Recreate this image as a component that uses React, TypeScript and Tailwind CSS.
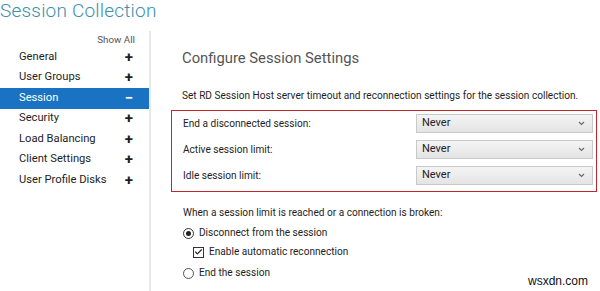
import { Check } from 'lucide-react';

const navItems = [
    { label: 'General', open: false },
    { label: 'User Groups', open: false },
    { label: 'Session', open: true },
    { label: 'Security', open: false },
    { label: 'Load Balancing', open: false },
    { label: 'Client Settings', open: false },
    { label: 'User Profile Disks', open: false },
];

const limits = [
    'End a disconnected session:',
    'Active session limit:',
    'Idle session limit:',
];

const Chevron = () => (
    <svg width="7" height="5" viewBox="0 0 7 5" className="text-[#6b6b6b]">
        <path d="M1 1 L3.5 3.5 L6 1" fill="none" stroke="currentColor" strokeWidth="1.2" />
    </svg>
);

const Select = () => (
    <div className="w-[177px] h-[19px] flex items-center justify-between pl-[5px] pr-[7px] border border-[#c9c9c9] bg-gradient-to-b from-[#f4f4f4] to-[#e4e4e4] text-[11px] text-[#222]">
        <span>Never</span>
        <Chevron />
    </div>
);

const App = () => {
    return (
        <div className="w-[600px] h-[291px] overflow-hidden bg-white relative font-['Roboto',sans-serif] text-[#1e1e1e]">
            <h1 className="mt-[1px] text-[19px] leading-[20px] font-light text-[#3b8fab] tracking-[0.2px]">
                Session Collection
            </h1>

            <div className="flex mt-[10px]">
                {/* left nav */}
                <div className="w-[151px] shrink-0 h-[260px] border-r-[2px] border-[#e8e8e8] pt-[1px]">
                    <div className="text-right pr-[14px] text-[9.8px] text-[#555] leading-[14px] h-[14px] mt-[1px]">
                        Show All
                    </div>
                    <div className="mt-[0px]">
                        {navItems.map((item) => (
                            <div
                                key={item.label}
                                className={
                                    item.open
                                        ? 'h-[20.5px] flex items-center justify-between pl-[19px] pr-[16px] bg-[#1a73c2] text-white text-[11.2px]'
                                        : 'h-[20.5px] flex items-center justify-between pl-[19px] pr-[16px] text-[11.2px] text-[#1e1e1e]'
                                }
                            >
                                <span>{item.label}</span>
                                <span className="text-[15px] font-bold leading-none">{item.open ? '−' : '+'}</span>
                            </div>
                        ))}
                    </div>
                </div>

                {/* main */}
                <div className="flex-1 min-w-0 pl-[20px] pr-[3px]">
                    <h2 className="ml-[11px] mt-[16px] text-[14.8px] leading-[22px] text-[#555]">
                        Configure Session Settings
                    </h2>
                    <p className="ml-[11px] mt-[20px] text-[10.1px] leading-[14px] text-[#1e1e1e] whitespace-nowrap">
                        Set RD Session Host server timeout and reconnection settings for the session collection.
                    </p>
                    <div className="mt-[7px] border border-[#c0262c] pl-[11px] pr-[3px] pt-[3px] pb-[6px] flex flex-col gap-[7px]">
                        {limits.map((l) => (
                            <div key={l} className="flex items-center justify-between h-[19px]">
                                <span className="text-[10.1px]">{l}</span>
                                <Select />
                            </div>
                        ))}
                    </div>

                    <div className="ml-[12px] mt-[14px] text-[10.1px] leading-[14px]">
                        <p>When a session limit is reached or a connection is broken:</p>
                        <div className="flex items-center gap-[5px] mt-[6px]">
                            <span className="w-[11px] h-[11px] rounded-full border border-[#333] flex items-center justify-center">
                                <span className="w-[5px] h-[5px] rounded-full bg-[#222]" />
                            </span>
                            <span>Disconnect from the session</span>
                        </div>
                        <div className="flex items-center gap-[5px] mt-[5px] ml-[10px]">
                            <span className="w-[11px] h-[11px] border border-[#333] flex items-center justify-center">
                                <Check size={10} strokeWidth={3} className="text-[#222]" />
                            </span>
                            <span>Enable automatic reconnection</span>
                        </div>
                        <div className="flex items-center gap-[5px] mt-[7px]">
                            <span className="w-[11px] h-[11px] rounded-full border border-[#555]" />
                            <span>End the session</span>
                        </div>
                    </div>
                </div>
            </div>

            <div className="absolute right-[12px] bottom-[1px] font-['Liberation_Sans',sans-serif] text-[12px] text-[#111]">
                wsxdn.com
            </div>
        </div>
    );
};

export default App;
